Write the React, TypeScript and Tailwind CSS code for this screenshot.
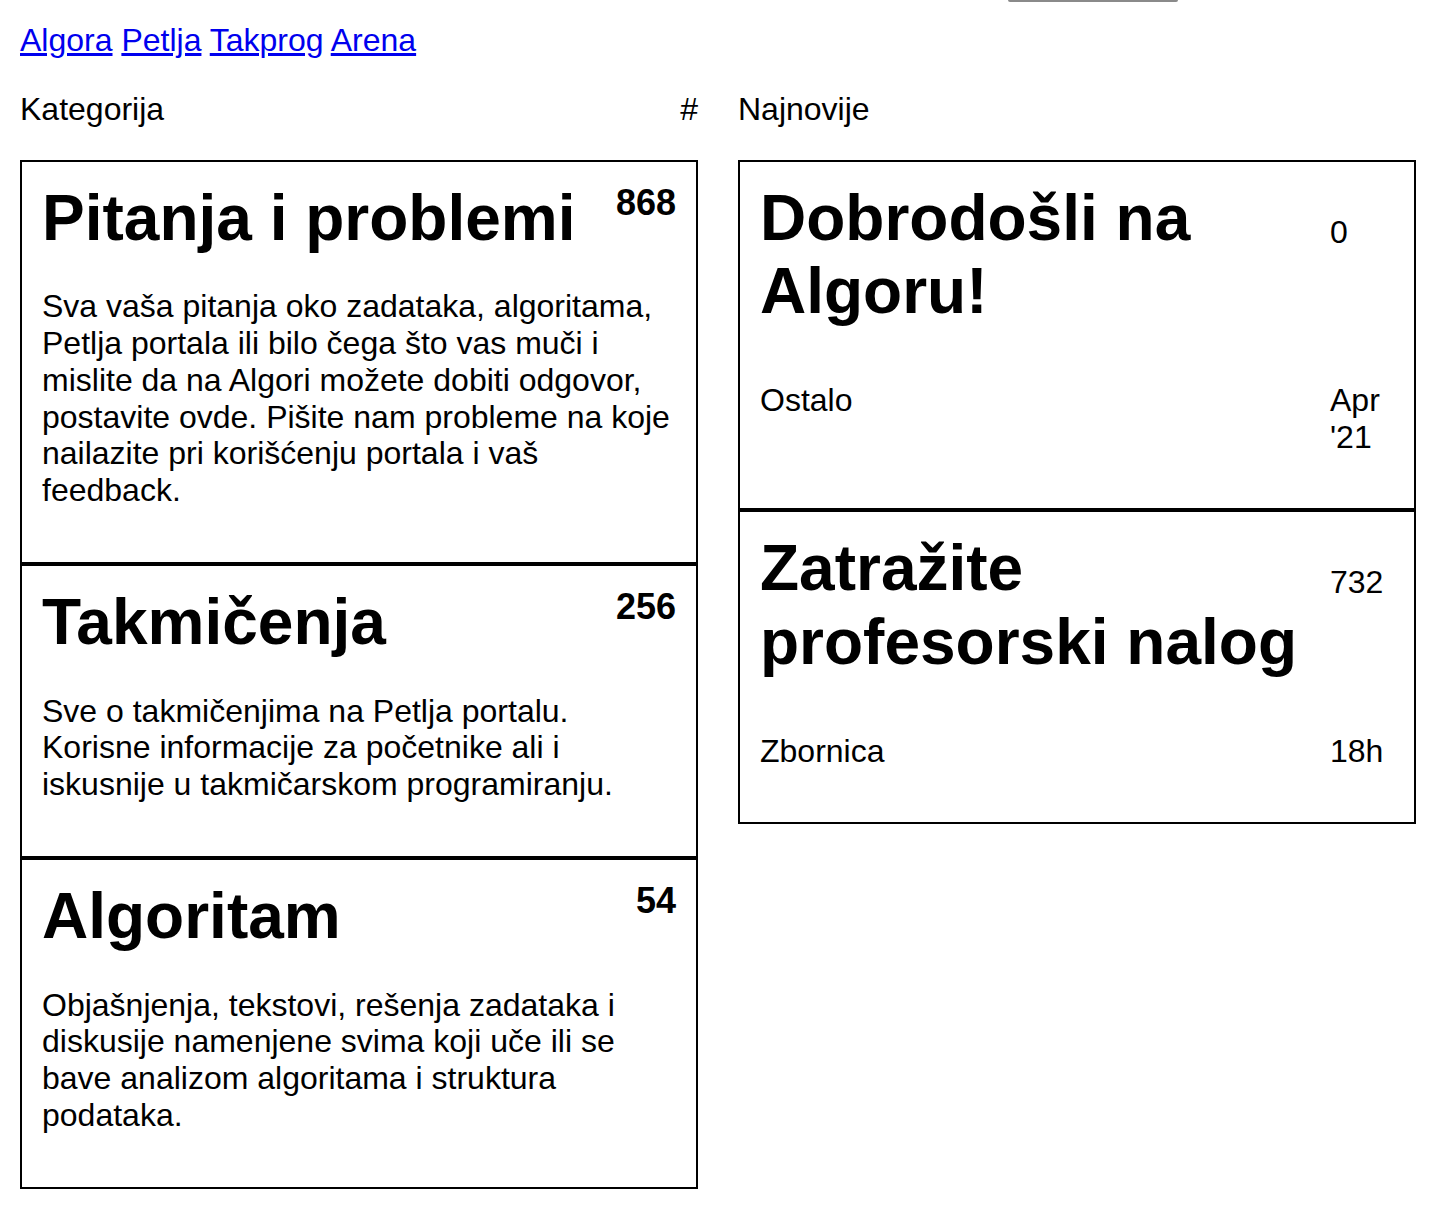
import React from "react";

type Category = {
  title: string;
  count: number;
  description: string;
};

type Topic = {
  title: string;
  replies: string;
  category: string;
  activity: string;
};

const categories: Category[] = [
  {
    title: "Pitanja i problemi",
    count: 868,
    description:
      "Sva vaša pitanja oko zadataka, algoritama, Petlja portala ili bilo čega što vas muči i mislite da na Algori možete dobiti odgovor, postavite ovde. Pišite nam probleme na koje nailazite pri korišćenju portala i vaš feedback.",
  },
  {
    title: "Takmičenja",
    count: 256,
    description:
      "Sve o takmičenjima na Petlja portalu. Korisne informacije za početnike ali i iskusnije u takmičarskom programiranju.",
  },
  {
    title: "Algoritam",
    count: 54,
    description:
      "Objašnjenja, tekstovi, rešenja zadataka i diskusije namenjene svima koji uče ili se bave analizom algoritama i struktura podataka.",
  },
];

const topics: Topic[] = [
  { title: "Dobrodošli na Algoru!", replies: "0", category: "Ostalo", activity: "Apr '21" },
  { title: "Zatražite profesorski nalog", replies: "732", category: "Zbornica", activity: "18h" },
];

const links = ["Algora", "Petlja", "Takprog", "Arena"];

// One category block in the left column
const CategoryCard = ({ category }: { category: Category }) => {
  return (
    <div className="border-2 border-black px-5 pt-5 pb-[53px]">
      <div className="flex justify-between items-start">
        <h1 className="text-[64px] font-bold leading-[1.15]">{category.title}</h1>
        <span className="text-[36px] font-bold leading-[1.15]">{category.count}</span>
      </div>
      <p className="mt-[33px] text-[32px] leading-[1.15]">{category.description}</p>
    </div>
  );
};

// One latest-topic block in the right column
const TopicCard = ({ topic }: { topic: Topic }) => {
  return (
    <div className="border-2 border-black px-5 pt-5 pb-[53px]">
      <div className="grid grid-cols-[1fr_64px] gap-x-5">
        <h1 className="text-[64px] font-bold leading-[1.15]">{topic.title}</h1>
        <span className="mt-8 text-[32px] leading-[1.15]">{topic.replies}</span>
        <span className="mt-[53px] text-[32px] leading-[1.15]">{topic.category}</span>
        <span className="mt-[53px] text-[32px] leading-[1.15]">{topic.activity}</span>
      </div>
    </div>
  );
};

const App = () => {
  return (
    <div className="min-h-screen bg-white text-black font-['Liberation_Sans',Arial,sans-serif]">
      <div className="ml-[1008px] h-[2px] w-[170px] rounded-b bg-[#8a8a8a]" />
      <div className="px-5 pt-5 pb-5">
        <div className="text-[32px] leading-[1.15]">
          {links.map((link, index) => (
            <span key={link}>
              <a href="#" className="text-[#0000ee] underline">
                {link}
              </a>
              {index < links.length - 1 && " "}
            </span>
          ))}
        </div>

        <div className="mt-8 grid grid-cols-[678px_678px] gap-x-10">
          <div>
            <div className="flex justify-between text-[32px] leading-[1.15] mb-8">
              <span>Kategorija</span>
              <span>#</span>
            </div>
            {categories.map((category) => (
              <CategoryCard key={category.title} category={category} />
            ))}
          </div>
          <div>
            <div className="text-[32px] leading-[1.15] mb-8">Najnovije</div>
            {topics.map((topic) => (
              <TopicCard key={topic.title} topic={topic} />
            ))}
          </div>
        </div>
      </div>
    </div>
  );
};

export default App;
